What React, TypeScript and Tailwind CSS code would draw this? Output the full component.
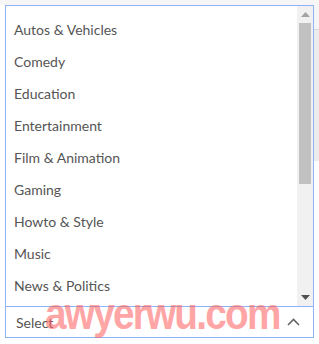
const categories = [
  "Autos & Vehicles",
  "Comedy",
  "Education",
  "Entertainment",
  "Film & Animation",
  "Gaming",
  "Howto & Style",
  "Music",
  "News & Politics",
  "Nonprofits & Activism",
  "People & Blogs",
];

export default function App() {
  return (
    <div
      className="relative w-[319px] h-[344px] overflow-hidden bg-white"
      style={{ fontFamily: "Lato, 'Noto Sans', sans-serif" }}
    >
      <div className="h-[5px] bg-[#f6f6f6]" />
      <div className="flex">
        <div className="w-[5px]" />
        <div className="w-[309px]">
          {/* open list */}
          <div className="h-[301px] flex border border-b-0 border-[#8fb4f5] bg-white">
            <ul className="flex-1 overflow-hidden pt-[7px]">
              {categories.map((c) => (
                <li key={c} className="h-8 flex items-center pl-2 text-[14px] text-[#555]">
                  {c}
                </li>
              ))}
            </ul>
            <div className="w-[16px] bg-[#f1f1f1] flex flex-col">
              <div className="h-[17px] flex items-center justify-center">
                <svg width="9" height="5" viewBox="0 0 9 5">
                  <path d="M0 5 L4.5 0 L9 5 Z" fill="#a3a3a3" />
                </svg>
              </div>
              <div className="mx-[2px] h-[161px] bg-[#c1c1c1]" />
              <div className="flex-1" />
              <div className="h-[17px] flex items-center justify-center">
                <svg width="9" height="5" viewBox="0 0 9 5">
                  <path d="M0 0 L4.5 5 L9 0 Z" fill="#505050" />
                </svg>
              </div>
            </div>
          </div>
          {/* select */}
          <div className="h-[32px] flex items-center justify-between border border-[#8fb4f5] pl-[10px] pr-[13px] text-[14px] text-[#555]">
            <span>Select</span>
            <svg width="13" height="8" viewBox="0 0 13 8">
              <path d="M1 7 L6.5 1.5 L12 7" fill="none" stroke="#666" strokeWidth="1.6" />
            </svg>
          </div>
        </div>
        <div className="w-[5px] flex flex-col">
          <div className="h-[24px] bg-[#f6f6f6]" />
          <div className="h-px bg-[#d8d8d8]" />
          <div className="h-[131px] bg-[#ececec]" />
        </div>
      </div>
      <div
        className="absolute left-[45px] top-[292px] origin-left scale-x-[0.88] text-[44px] font-bold tracking-[-2px] text-[#ff5c5c] opacity-55 leading-none pointer-events-none"
        style={{ fontFamily: "'Liberation Sans', sans-serif" }}
      >
        awyerwu.com
      </div>
    </div>
  );
}
